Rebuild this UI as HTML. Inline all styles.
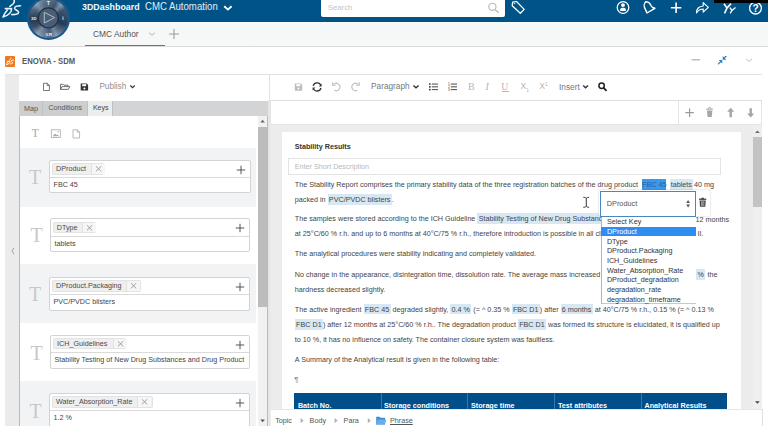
<!DOCTYPE html>
<html><head><meta charset="utf-8">
<style>
*{box-sizing:border-box;margin:0;padding:0}
html,body{width:768px;height:426px;overflow:hidden;background:#fff;font-family:"Liberation Sans",sans-serif;color:#3d3d3d}
.a{position:absolute}
.t{white-space:pre;line-height:1}
/* top bar */
#top{left:0;top:0;width:768px;height:21.5px;background:#005386}
#tabs{left:0;top:21.5px;width:768px;height:25px;background:linear-gradient(#f5f9f9,#f7f7f7);border-bottom:1.3px solid #dadada}
#hdr{left:0;top:46.5px;width:768px;height:28px;background:#fff}
#hdrline{left:5px;top:74px;width:757px;height:1px;background:#e2e2e2}
#lstrip{left:5px;top:74.5px;width:13.5px;height:352px;background:#ebebeb}
/* left panel */
#ltool{left:18.5px;top:75px;width:250.5px;height:25.5px;background:#fff}
#vdiv{left:269px;top:74.5px;width:1px;height:26px;background:#e2e2e2}
#ltabs{left:18.5px;top:100.5px;width:249.5px;height:15.5px;background:#d1d2d3}
.ltab{top:0;height:15.5px;font-size:7.2px;color:#555;line-height:15.5px;text-align:center;border-right:1px solid #c2c3c4}
#lcont{left:18.5px;top:116px;width:249.5px;height:310px;background:#fff}
.item{left:20px;width:235.5px;height:58.25px}
.item.g{background:#f2f3f4}
.bigT{font-family:"Liberation Serif",serif;font-size:20px;color:#c8c8c8;left:9px;top:20px}
.box{left:28.8px;top:12.4px;width:200.8px;height:33.2px;border:1px solid #d3d3d3;border-radius:2px;background:#fff}
.boxdiv{left:0;top:16px;width:100%;height:1px;background:#dadada}
.chip{left:2px;top:1.9px;height:11px;background:#efefef;border:1px solid #e3e3e3;border-radius:1.5px}
.chip .ct{position:absolute;left:3.2px;top:0.6px;font-size:7.2px;color:#4a4a4a;white-space:pre;line-height:1}
.chip .cx{position:absolute;top:0;width:14px;height:9px;border-left:1px solid #e0e0e0;background:#f6f6f6}
.chip .cx svg{position:absolute;left:0;top:0}
.plus{right:4px;top:3px;width:9px;height:9px}
.val{left:3.5px;top:20.5px;font-size:7.2px;color:#444}
/* right panel */
#rtool{left:270px;top:74.5px;width:492px;height:26px;background:#fff}
#rbox{left:270px;top:100px;width:492px;height:25px;background:#fff;border:1px solid #e4e4e4;border-top:1.7px solid #dedede}
#rboxdiv{left:678px;top:101px;width:1px;height:24px;background:#e4e4e4}
#gray{left:270px;top:125px;width:492px;height:301px;background:#ececec}
#page{left:282px;top:132px;width:458.5px;height:294px;background:#fff}
#rscroll{left:752.5px;top:125px;width:9.5px;height:284px;background:#ececec}
#crumb{left:270.5px;top:409px;width:492.5px;height:18px;background:#fff;border-top:1px solid #e6e6e6;border-right:1px solid #dedede}
.doc{font-size:7.2px;color:#444;line-height:15px;white-space:pre}
.hl{background:#d7e7f4;padding:0.9px 1.3px}
.hs{background:#3c97f0;color:#2a5f9a;padding:0.9px 0;margin-left:2.1px}
</style></head><body>

<div id="top" class="a"></div>
<div id="tabs" class="a"></div>
<!-- 3ds logo -->
<svg class="a" style="left:0;top:0" width="24" height="21" viewBox="0 0 24 21">
<g fill="none" stroke="#eaf2fa" stroke-width="1.55" stroke-linecap="round" stroke-linejoin="round">
<path d="M14,0 C15,2 13,4.5 9.8,6.4"/>
<path d="M5.3,8.6 L11.5,8.6 C12.2,12 8.5,15.5 3,17 C4,14.5 5.5,12 7.2,10.2"/>
<path d="M20.5,5.7 C17,5.7 14.2,6.6 14.6,8.5 C15,10.2 19,10.6 18.6,12.6 C18.2,14.3 14.5,14.6 11.8,14.6"/>
</g></svg>
<!-- compass -->
<div class="a" style="left:26.6px;top:-3.6px;width:43.4px;height:43.4px;border-radius:50%;background:#1a5689"></div>
<div class="a" style="left:28.9px;top:-1.3px;width:38.8px;height:38.8px;border-radius:50%;background:conic-gradient(from 0deg,#6d87a2 0deg,#4f6a88 25deg,#9db3c8 42deg,#4a6483 60deg,#3a5472 85deg,#2c445f 110deg,#6f8aa5 140deg,#a2b7ca 155deg,#5e7894 175deg,#7f97b0 195deg,#a8bcce 215deg,#40597a 240deg,#2a425d 270deg,#5c7693 300deg,#a4b8cb 320deg,#6d87a2 345deg,#6d87a2 360deg)"></div>
<div class="a" style="left:28.9px;top:-1.3px;width:38.8px;height:38.8px;border-radius:50%;background:radial-gradient(circle,rgba(20,35,55,0.4) 0%,rgba(20,35,55,0.3) 52%,rgba(20,35,55,0.0) 82%,rgba(255,255,255,0.1) 100%)"></div>
<svg class="a" style="left:26px;top:0" width="45" height="41" viewBox="26 0 45 41">
<circle cx="48.3" cy="17.9" r="10.6" fill="#223244"/>
<circle cx="48.3" cy="17.9" r="9.3" fill="#4a5e76"/>
<path d="M44.3,12.3 L54.6,17.6 L44.3,23 Z" fill="none" stroke="#b9c7d6" stroke-width="0.9" stroke-linejoin="round"/>
<text x="48.3" y="5" font-size="4.6" fill="#eef3f7" text-anchor="middle" font-family="Liberation Sans" font-weight="bold">T</text>
<text x="33.8" y="19.6" font-size="4.3" fill="#eef3f7" text-anchor="middle" font-family="Liberation Sans" font-weight="bold">3D</text>
<text x="62.9" y="19.6" font-size="4.8" fill="#eef3f7" text-anchor="middle" font-family="Liberation Sans" font-weight="bold">i</text>
<text x="48.8" y="35.5" font-size="4.3" fill="#eef3f7" text-anchor="middle" font-family="Liberation Sans" font-weight="bold">V.R</text>
</svg>
<div class="a t" style="left:81.5px;top:2.2px;font-size:9.7px;font-weight:bold;color:#f4f8fb;transform:scaleX(0.915);transform-origin:0 0">3DDashboard</div>
<div class="a t" style="left:145px;top:2.1px;font-size:10.3px;color:#e3ecf3;transform:scaleX(0.935);transform-origin:0 0">CMC Automation</div>
<svg class="a" style="left:223px;top:4.5px" width="10" height="6" viewBox="0 0 10 6"><path d="M1.2,1.3 L4.9,4.6 L8.6,1.3" fill="none" stroke="#fff" stroke-width="1.9"/></svg>
<!-- search -->
<div class="a" style="left:321px;top:-2px;width:184px;height:19.2px;background:#fff;border-radius:2px"></div>
<div class="a t" style="left:327.7px;top:4.1px;font-size:7.8px;color:#c4c4c4">Search</div>
<svg class="a" style="left:486px;top:1px" width="15" height="14" viewBox="486 1 15 14"><circle cx="492.4" cy="6.8" r="3.6" fill="none" stroke="#bababa" stroke-width="1.15"/><path d="M495,9.4 L498.6,12.8" stroke="#bababa" stroke-width="1.4"/></svg>
<svg class="a" style="left:510px;top:0" width="17" height="16" viewBox="510 0 17 16"><path d="M512.6,2.2 L516.5,1.5 L524.2,9.4 L520.3,13.3 L512.2,5.8 Z" fill="none" stroke="#fff" stroke-width="1.25" stroke-linejoin="round"/><circle cx="514.6" cy="3.6" r="0.7" fill="#fff"/></svg>
<!-- right icons -->
<svg class="a" style="left:615px;top:0" width="153" height="18" viewBox="615 0 153 18">
<g fill="none" stroke="#fff" stroke-width="1.25">
<circle cx="623" cy="7.5" r="5.8"/>
<path d="M645.8,1.9 C648,1.7 650,3 650.8,5.2 C651.5,7 652.5,7.8 654.9,8.3 L646.9,13 C646.5,11.5 645.8,10 644.9,8.3 C643.8,6.2 644,3.2 645.8,1.9 Z" stroke-width="1.4" stroke-linejoin="round"/><circle cx="645.9" cy="1.7" r="0.8" fill="#fff" stroke="none"/>
<path d="M670.9,7.8 L681.3,7.8 M676.1,2.6 L676.1,13" stroke-width="1.6"/>
<path d="M696.5,13 C696.3,8.8 699,6.2 703.2,6 L703.2,2.6 L708.3,7.4 L703.2,12.2 L703.2,9 C700.2,9 698,10.6 696.5,13 Z" stroke-width="1.15" stroke-linejoin="round"/>
<circle cx="755.5" cy="8.1" r="5.9" stroke-width="1.3"/>
</g>
<circle cx="623" cy="5.1" r="1.95" fill="#fff"/>
<path d="M620.2,10.9 L620.2,9.5 C620.2,8.4 621.2,7.8 623,7.8 C624.8,7.8 625.8,8.4 625.8,9.5 L625.8,10.9 Z" fill="#fff"/>
<text x="755.6" y="11.7" font-size="10.2" fill="#fff" text-anchor="middle" font-family="Liberation Sans" font-weight="bold">?</text>
<path d="M724,3.8 L727,8 L724.5,13.4 M731,3.6 L727,8" fill="none" stroke="#fff" stroke-width="1.6"/>
<path d="M729.8,7.6 L732,10.4 L730.2,13.4 M735.5,7.6 L732,10.4" fill="none" stroke="#fff" stroke-width="1.3"/>
</svg>
<div class="a" style="left:714px;top:0;width:54px;height:2.9px;background:#000"></div>
<!-- tab -->
<div class="a t" style="left:93px;top:30.3px;font-size:8.4px;color:#555">CMC Author</div>
<svg class="a" style="left:148px;top:31px" width="8" height="6" viewBox="0 0 8 6"><path d="M1,1.8 L4,4.2 L7,1.8" fill="none" stroke="#aaa" stroke-width="0.9"/></svg>
<svg class="a" style="left:168px;top:28px" width="12" height="12" viewBox="0 0 12 12"><path d="M1,6 L11,6 M6,1 L6,11" fill="none" stroke="#9a9a9a" stroke-width="1.1"/></svg>
<div class="a" style="left:84.7px;top:44.6px;width:80.5px;height:1.8px;background:#3f7fb5"></div>
<div id="hdr" class="a"></div>
<div id="hdrline" class="a"></div>
<div class="a" style="left:5.2px;top:56.2px;width:9.8px;height:10.5px;background:#eb7a22;border-radius:1px"></div>
<svg class="a" style="left:5px;top:56.5px" width="10" height="10" viewBox="0 0 24 21"><g fill="none" stroke="#fff" stroke-width="2.2" stroke-linecap="round"><path d="M14,1 C15,3 13,5 10,7"/><path d="M5.3,9 L11.5,9 C12.2,12 8.5,15.5 3,17.5 C4,14.5 5.5,12 7.2,10.4"/><path d="M20.5,6 C17,6 14.2,7 14.6,9 C15,10.5 19,11 18.6,13 C18.2,14.5 14.5,15 11.8,15"/></g></svg>
<div class="a t" style="left:21.6px;top:56.6px;font-size:8.5px;font-weight:bold;color:#595959;transform:scaleX(0.905);transform-origin:0 0">ENOVIA - SDM</div>
<svg class="a" style="left:690px;top:56px" width="70" height="10" viewBox="690 56 70 10">
<path d="M691.6,59.8 L700.1,59.8" stroke="#b4b4b4" stroke-width="1.3"/>
<path d="M718.5,63.9 L721.3,61.1 M726.4,55.8 L723.6,58.6" fill="none" stroke="#2f7fc0" stroke-width="1.3" stroke-linecap="round"/>
<path d="M722.3,59.9 L718.7,59.9 L722.3,63.5 Z M722.7,59.7 L722.7,56.1 L726.3,59.7 Z" fill="#2f7fc0"/>
<path d="M746.2,59 L749.1,61.4 L752,59" fill="none" stroke="#b0b0b0" stroke-width="0.8"/>
</svg>
<div id="lstrip" class="a"></div>
<div id="ltool" class="a"></div>
<div id="vdiv" class="a"></div>
<div id="ltabs" class="a"></div>
<div id="lcont" class="a"></div>
<!-- left toolbar -->
<svg class="a" style="left:40px;top:80px" width="100" height="14" viewBox="40 80 100 14">
<path d="M43.5,83.3 L47.4,83.3 L49.4,85.3 L49.4,90.5 L43.5,90.5 Z M47.2,83.4 L47.2,85.5 L49.3,85.5" fill="none" stroke="#555" stroke-width="0.8" stroke-linejoin="round"/>
<path d="M60.5,89.4 L60.5,84.3 L63.2,84.3 L64,85.2 L68,85.2 L68,86.4 M60.5,89.4 L62,86.6 L69.8,86.6 L68.3,89.4 Z" fill="none" stroke="#555" stroke-width="0.85" stroke-linejoin="round"/>
<path d="M80.7,83.4 L86.6,83.4 L88.1,84.9 L88.1,90.6 L80.7,90.6 Z" fill="#333"/>
<rect x="82.2" y="84.2" width="4" height="2" fill="#fff"/>
<circle cx="84.4" cy="88.5" r="1" fill="#fff"/>
<path d="M130.3,85.5 L132.5,87.6 L134.7,85.5" fill="none" stroke="#333" stroke-width="1.2"/>
</svg>
<div class="a t" style="left:99.4px;top:83.4px;font-size:8.2px;color:#8f8f8f">Publish</div>
<!-- tabs -->
<div class="a" style="left:18.5px;top:101px;width:249px;height:14.5px;background:#d3d4d5"></div>
<div class="a" style="left:18.5px;top:101px;width:24px;height:14.5px;background:#cdcecf;border-right:1px solid #c0c1c2"></div>
<div class="a" style="left:42.6px;top:101px;width:45px;height:14.5px;background:#cdcecf;border-right:1px solid #c0c1c2"></div>
<div class="a" style="left:87.6px;top:101px;width:25.6px;height:15px;background:#ededed;border-right:1px solid #bfc0c1"></div>
<div class="a t" style="left:23.9px;top:104.6px;font-size:7.2px;color:#555">Map</div>
<div class="a t" style="left:48.5px;top:105.1px;font-size:7.1px;color:#555">Conditions</div>
<div class="a t" style="left:92.9px;top:105.1px;font-size:7.1px;color:#444">Keys</div>
<!-- key panel icons -->
<div class="a t" style="left:31.8px;top:127.5px;font-family:'Liberation Serif',serif;font-size:11.5px;color:#a9a9a9">T</div>
<svg class="a" style="left:48px;top:127px" width="36" height="13" viewBox="48 127 36 13">
<rect x="51.3" y="129.8" width="9" height="7.6" fill="none" stroke="#a9a9a9" stroke-width="0.8"/>
<path d="M52.8,136.3 L55,133.6 L56.6,135.2 L57.6,134.2 L59,136.3 Z" fill="#a9a9a9"/>
<circle cx="58.2" cy="131.8" r="0.7" fill="#a9a9a9"/>
<path d="M73,129.8 L77.4,129.8 L79.6,132 L79.6,138 L73,138 Z M77.2,129.9 L77.2,132.2 L79.5,132.2" fill="none" stroke="#a9a9a9" stroke-width="0.8" stroke-linejoin="round"/>
</svg>
<!-- scrollbar left -->
<div class="a" style="left:258px;top:116px;width:9.2px;height:310px;background:#f1f1f1"></div>
<div class="a" style="left:258px;top:126.7px;width:9.2px;height:180px;background:#bcbcbc"></div>
<svg class="a" style="left:258px;top:116px" width="10" height="10" viewBox="0 0 10 10"><path d="M2.3,6.5 L4.6,3.8 L6.9,6.5 Z" fill="#6a6a6a"/></svg>
<svg class="a" style="left:258px;top:416px" width="10" height="10" viewBox="0 0 10 10"><path d="M2.3,3.6 L4.6,6.3 L6.9,3.6 Z" fill="#555"/></svg>
<div class="a" style="left:18.8px;top:116px;width:1.1px;height:310px;background:#9fc2e2"></div>
<div class="a" style="left:267.2px;top:116px;width:1.1px;height:310px;background:#9fc2e2"></div>
<div class="a" style="left:268.3px;top:100px;width:1.8px;height:326px;background:#e6e6e6"></div>
<svg class="a" style="left:10px;top:246px" width="6" height="10" viewBox="0 0 6 10"><path d="M4,1.8 L2,5 L4,8.2" fill="none" stroke="#9a9a9a" stroke-width="0.9"/></svg>
<!-- items -->
<div class="a item g" style="top:148.2px;height:58.5px"></div>
<div class="a item" style="top:206.7px;height:58.5px"></div>
<div class="a item g" style="top:264.2px;height:58.5px"></div>
<div class="a item" style="top:322.7px;height:58.5px"></div>
<div class="a item g" style="top:381.3px;height:45px"></div>
<div class="a t bigT" style="left:29.0px;top:167.0px">T</div>
<div class="a box" style="left:49px;top:160px;width:201.5px;height:33px">
 <div class="a boxdiv" style="top:16px"></div>
 <div class="a chip" style="left:1.9px;top:2px;height:12px;width:52.5px"><span class="ct" style="top:0.6px">DProduct</span><span class="cx" style="left:37.7px;height:10px"><svg width="13" height="10" viewBox="0 0 13 10"><path d="M3.9,2.2 L9.2,7.4 M9.2,2.2 L3.9,7.4" stroke="#8a8a8a" stroke-width="0.8"/></svg></span></div>
 <svg class="a" style="right:3.8px;top:3.8px" width="10" height="10" viewBox="0 0 10 10"><path d="M0.8,5 L9.2,5 M5,0.8 L5,9.2" stroke="#555" stroke-width="1"/></svg>
 <div class="a t val" style="top:20.3px">FBC 45</div>
</div>
<div class="a t bigT" style="left:30.6px;top:225.2px">T</div>
<div class="a box" style="left:50px;top:218px;width:199.5px;height:34px">
 <div class="a boxdiv" style="top:17px"></div>
 <div class="a chip" style="left:1.6px;top:3px;height:11px;width:43.5px"><span class="ct" style="top:0.6px">DType</span><span class="cx" style="left:28.4px;height:9px"><svg width="13" height="10" viewBox="0 0 13 10"><path d="M3.9,2.2 L9.2,7.4 M9.2,2.2 L3.9,7.4" stroke="#8a8a8a" stroke-width="0.8"/></svg></span></div>
 <svg class="a" style="right:3.8px;top:3.8px" width="10" height="10" viewBox="0 0 10 10"><path d="M0.8,5 L9.2,5 M5,0.8 L5,9.2" stroke="#555" stroke-width="1"/></svg>
 <div class="a t val" style="top:20.7px">tablets</div>
</div>
<div class="a t bigT" style="left:29.0px;top:284.2px">T</div>
<div class="a box" style="left:49px;top:277px;width:201px;height:34px">
 <div class="a boxdiv" style="top:16px"></div>
 <div class="a chip" style="left:1.9px;top:2px;height:12px;width:88.9px"><span class="ct" style="top:0.6px">DProduct.Packaging</span><span class="cx" style="left:73.6px;height:10px"><svg width="13" height="10" viewBox="0 0 13 10"><path d="M3.9,2.2 L9.2,7.4 M9.2,2.2 L3.9,7.4" stroke="#8a8a8a" stroke-width="0.8"/></svg></span></div>
 <svg class="a" style="right:3.8px;top:3.8px" width="10" height="10" viewBox="0 0 10 10"><path d="M0.8,5 L9.2,5 M5,0.8 L5,9.2" stroke="#555" stroke-width="1"/></svg>
 <div class="a t val" style="top:20.3px">PVC/PVDC blisters</div>
</div>
<div class="a t bigT" style="left:30.6px;top:342.8px">T</div>
<div class="a box" style="left:50px;top:335px;width:199.5px;height:34px">
 <div class="a boxdiv" style="top:16px"></div>
 <div class="a chip" style="left:1.9px;top:2px;height:11px;width:73.2px"><span class="ct" style="top:0.6px">ICH_Guidelines</span><span class="cx" style="left:58.7px;height:9px"><svg width="13" height="10" viewBox="0 0 13 10"><path d="M3.9,2.2 L9.2,7.4 M9.2,2.2 L3.9,7.4" stroke="#8a8a8a" stroke-width="0.8"/></svg></span></div>
 <svg class="a" style="right:3.8px;top:3.8px" width="10" height="10" viewBox="0 0 10 10"><path d="M0.8,5 L9.2,5 M5,0.8 L5,9.2" stroke="#555" stroke-width="1"/></svg>
 <div class="a t val" style="top:20.3px">Stability Testing of New Drug Substances and Drug Product</div>
</div>
<div class="a t bigT" style="left:29.5px;top:401.0px">T</div>
<div class="a box" style="left:49px;top:393px;width:201px;height:34px">
 <div class="a boxdiv" style="top:16px"></div>
 <div class="a chip" style="left:1.8px;top:2px;height:12px;width:101.0px"><span class="ct" style="top:0.6px">Water_Absorption_Rate</span><span class="cx" style="left:84.5px;height:10px"><svg width="13" height="10" viewBox="0 0 13 10"><path d="M3.9,2.2 L9.2,7.4 M9.2,2.2 L3.9,7.4" stroke="#8a8a8a" stroke-width="0.8"/></svg></span></div>
 <svg class="a" style="right:3.8px;top:3.8px" width="10" height="10" viewBox="0 0 10 10"><path d="M0.8,5 L9.2,5 M5,0.8 L5,9.2" stroke="#555" stroke-width="1"/></svg>
 <div class="a t val" style="top:20.3px">1.2 %</div>
</div>
<!-- /items -->
<div id="rtool" class="a"></div>
<div id="rbox" class="a"></div>
<div id="rboxdiv" class="a"></div>
<div id="gray" class="a"></div>
<div id="page" class="a"></div>
<!-- doc -->
<div class="a t" style="left:294.8px;top:143.3px;font-size:7.2px;font-weight:bold;color:#333">Stability Results</div>
<div class="a" style="left:288px;top:158px;width:433px;height:17px;border:1px solid #e3e3e3;background:#fff"></div>
<div class="a t" style="left:294.8px;top:162.8px;font-size:7.2px;color:#b8b8b8">Enter Short Description</div>
<div id="doc">
<div class="a doc" style="left:294.8px;top:176.7px">The Stability Report comprises the primary stability data of the three registration batches of the drug product <span class="hs">FBC 45</span> <span class="hl" style="padding:0.9px 1.1px;margin-left:1.1px">tablets</span><span style="margin-left:1px">40 mg</span></div>
<div class="a doc" style="left:294.8px;top:191.7px">packed in <span class="hl">PVC/PVDC blisters</span>.</div>
<div class="a doc" style="left:294.8px;top:211.2px">The samples were stored according to the ICH Guideline <span class="hl">Stability Testing of New Drug Substances and Drug Product</span></div>
<div class="a doc" style="left:695.5px;top:211.8px">12 months</div>
<div class="a doc" style="left:294.8px;top:225.8px">at 25°C/60 % r.h. and up to 6 months at 40°C/75 % r.h., therefore introduction is possible in all climatic zones I to IV.</div>
<div class="a doc" style="left:697.6px;top:225.8px">II.</div>
<div class="a doc" style="left:294.8px;top:246.1px">The analytical procedures were stability indicating and completely validated.</div>
<div class="a doc" style="left:294.8px;top:266.9px">No change in the appearance, disintegration time, dissolution rate. The average mass increased by 1.2</div>
<div class="a doc" style="left:695.9px;top:266.9px"><span class="hl" style="padding:0.9px 1.6px">%</span> the</div>
<div class="a doc" style="left:294.8px;top:282.2px">hardness decreased slightly.</div>
<div class="a doc" style="left:294.8px;top:301.6px">The active ingredient <span class="hl">FBC 45</span> degraded slightly, <span class="hl">0.4 %</span> (= ^ 0.35 % <span class="hl">FBC D1</span>) after <span class="hl">6 months</span> at 40°C/75 % r.h., 0.15 % (= ^ 0.13 %</div>
<div class="a doc" style="left:294.8px;top:316.8px"><span class="hl">FBC D1</span>) after 12 months at 25°C/60 % r.h.. The degradation product <span class="hl">FBC D1</span> was formed its structure is elucidated, it is qualified up</div>
<div class="a doc" style="left:294.8px;top:331.5px">to 10 %, it has no influence on safety. The container closure system was faultless.</div>
<div class="a doc" style="left:294.8px;top:351.8px">A Summary of the Analytical result is given in the following table:</div>
<div class="a doc" style="left:294.3px;top:372.3px;color:#8a8a8a;font-size:8px">¶</div>
</div>
<!-- popup -->
<div class="a" style="left:599.2px;top:190.3px;width:110.5px;height:26px;background:#fff;box-shadow:0 0 1.5px rgba(0,0,0,0.35);border-radius:1.5px"></div>
<div class="a" style="left:600.4px;top:191.4px;width:95.3px;height:25.3px;background:#fff;border:1px solid #4a86c0"></div>
<div class="a t" style="left:606.8px;top:199.8px;font-size:7.3px;color:#555">DProduct</div>
<svg class="a" style="left:684px;top:197px" width="9" height="13" viewBox="684 197 9 13"><path d="M686.2,203 L688.1,200 L690,203 Z M686.2,204.5 L688.1,207.5 L690,204.5 Z" fill="#555"/></svg>
<svg class="a" style="left:697px;top:196px" width="11" height="12" viewBox="697 196 11 12">
<rect x="699" y="198.6" width="7.3" height="1.3" fill="#444"/><rect x="701.3" y="197.8" width="2.7" height="1.2" fill="#444"/>
<path d="M699.6,200.4 L705.7,200.4 L705.3,206.7 L700,206.7 Z" fill="#444"/>
<path d="M701.5,201.2 L701.5,206 M702.65,201.2 L702.65,206 M703.8,201.2 L703.8,206" stroke="#fff" stroke-width="0.45"/>
</svg>
<div class="a" style="left:600.6px;top:216.7px;width:95.1px;height:87.8px;background:#fff;border-left:1px solid #b4b4b4;border-bottom:1px solid #c8c8c8"></div>
<div class="a" style="left:600.6px;top:227.4px;width:95.1px;height:9px;background:#2f8cf0"></div>
<div class="a" style="left:606.9px;top:217.2px;font-size:7.2px;line-height:9.7px;color:#333;white-space:pre">Select Key
<span style="color:#fff">DProduct</span>
DType
DProduct.Packaging
ICH_Guidelines
Water_Absorption_Rate
DProduct_degradation
degradation_rate
degradation_timeframe</div>
<!-- table header -->
<div class="a" style="left:294.4px;top:393.1px;width:433.1px;height:16px;background:#004f8a"></div>
<div class="a" style="left:380.6px;top:393.1px;width:0.8px;height:16px;background:#3a77a8"></div>
<div class="a" style="left:466.8px;top:393.1px;width:0.8px;height:16px;background:#3a77a8"></div>
<div class="a" style="left:554px;top:393.1px;width:0.8px;height:16px;background:#3a77a8"></div>
<div class="a" style="left:641.1px;top:393.1px;width:0.8px;height:16px;background:#3a77a8"></div>
<div class="a t" style="left:297.9px;top:402px;font-size:7.2px;font-weight:bold;color:#fff">Batch No.</div>
<div class="a t" style="left:384px;top:402px;font-size:7.2px;font-weight:bold;color:#fff">Storage conditions</div>
<div class="a t" style="left:471px;top:402px;font-size:7.2px;font-weight:bold;color:#fff">Storage time</div>
<div class="a t" style="left:558px;top:402px;font-size:7.2px;font-weight:bold;color:#fff">Test attributes</div>
<div class="a t" style="left:644.5px;top:402px;font-size:7.2px;font-weight:bold;color:#fff">Analytical Results</div>
<!-- right toolbar -->
<svg class="a" style="left:290px;top:78px" width="320" height="18" viewBox="290 78 320 18">
<path d="M294.8,83.4 L300.8,83.4 L302.2,84.8 L302.2,90.7 L294.8,90.7 Z" fill="#bdbdbd"/>
<rect x="296.2" y="84.2" width="4.2" height="2" fill="#fff"/><circle cx="298.5" cy="88.5" r="1" fill="#fff"/>
<g fill="none" stroke="#333" stroke-width="1.3">
<path d="M313.2,85.9 A4.1,4.1 0 0 1 320.7,84.9"/><path d="M321,88 A4.1,4.1 0 0 1 313.5,89"/>
</g>
<path d="M321.6,83.4 L321.6,86.4 L318.8,86.4 Z M312.6,90.6 L312.6,87.6 L315.4,87.6 Z" fill="#333"/>
<g fill="none" stroke="#bdbdbd" stroke-width="1.1">
<path d="M333.5,84.5 A3.7,3.7 0 1 1 334.5,90.3"/><path d="M332.6,82.3 L332.6,85.3 L335.6,85.3"/>
<path d="M358.3,84.5 A3.7,3.7 0 1 0 357.3,90.3"/><path d="M359.2,82.3 L359.2,85.3 L356.2,85.3"/>
</g>
<path d="M413.4,85.4 L416,87.8 L418.6,85.4" fill="none" stroke="#333" stroke-width="1.35"/>
<g fill="#333">
<rect x="429" y="83.3" width="1.6" height="1.5"/><rect x="429" y="86.1" width="1.6" height="1.5"/><rect x="429" y="88.9" width="1.6" height="1.5"/>
<rect x="431.8" y="83.6" width="6.2" height="0.9"/><rect x="431.8" y="86.4" width="6.2" height="0.9"/><rect x="431.8" y="89.2" width="6.2" height="0.9"/>
<rect x="450.8" y="83.6" width="6.2" height="0.9"/><rect x="450.8" y="86.4" width="6.2" height="0.9"/><rect x="450.8" y="89.2" width="6.2" height="0.9"/>
</g>
<text x="448" y="85.2" font-size="3.2" fill="#333" font-family="Liberation Sans">1</text>
<text x="448" y="88" font-size="3.2" fill="#333" font-family="Liberation Sans">2</text>
<text x="448" y="90.8" font-size="3.2" fill="#333" font-family="Liberation Sans">3</text>
<path d="M583.2,85.4 L585.6,87.8 L588,85.4" fill="none" stroke="#333" stroke-width="1.35"/>
<circle cx="601.6" cy="85.8" r="2.7" fill="none" stroke="#222" stroke-width="1.5"/>
<path d="M603.6,87.8 L606.6,90.8" stroke="#222" stroke-width="1.8"/>
</svg>
<div class="a t" style="left:371.1px;top:83.3px;font-size:8.25px;color:#777">Paragraph</div>
<div class="a t" style="left:467.9px;top:82px;font-family:'Liberation Serif',serif;font-size:10px;color:#b5b5b5">B</div>
<div class="a t" style="left:485.6px;top:82px;font-family:'Liberation Serif',serif;font-style:italic;font-size:10px;color:#b5b5b5">I</div>
<div class="a t" style="left:501.3px;top:82.3px;font-family:'Liberation Serif',serif;font-size:9.6px;color:#b5b5b5">U</div>
<div class="a" style="left:501.5px;top:91.2px;width:7.5px;height:0.9px;background:#b5b5b5"></div>
<div class="a t" style="left:520.4px;top:82.4px;font-size:8.6px;color:#b5b5b5">X<span style="font-size:5px;position:relative;top:2.5px">1</span></div>
<div class="a t" style="left:539.2px;top:82.4px;font-size:8.6px;color:#b5b5b5">X<span style="font-size:5px;position:relative;top:-3px">1</span></div>
<div class="a t" style="left:559px;top:83.3px;font-size:8.3px;color:#777">Insert</div>
<!-- rbox icons -->
<svg class="a" style="left:680px;top:103px" width="80" height="20" viewBox="680 103 80 20">
<path d="M685.4,112.7 L693.8,112.7 M689.6,108.5 L689.6,116.9" stroke="#9a9a9a" stroke-width="1.2"/>
<path d="M706.3,109.2 L713,109.2 M708.3,108.8 L708.8,107.7 L710.6,107.7 L711.1,108.8" fill="none" stroke="#a5a5a5" stroke-width="1"/>
<path d="M706.9,110.5 L712.4,110.5 L711.7,117 L707.6,117 Z" fill="#a5a5a5"/>
<path d="M730.7,107.8 L727.2,111.8 L729.5,111.8 L729.5,117.2 L731.9,117.2 L731.9,111.8 L734.2,111.8 Z" fill="#a5a5a5"/>
<path d="M750.7,117.6 L747.2,113.6 L749.5,113.6 L749.5,108.2 L751.9,108.2 L751.9,113.6 L754.2,113.6 Z" fill="#a5a5a5"/>
</svg>
<!-- right scrollbar -->
<div class="a" style="left:752.8px;top:125px;width:9.2px;height:284px;background:#efefef"></div>
<div class="a" style="left:753px;top:136.9px;width:8.6px;height:70.4px;background:#c3c3c3"></div>
<svg class="a" style="left:752.8px;top:127px" width="9" height="10" viewBox="0 0 9 10"><path d="M2,6 L4.4,3.5 L6.8,6 Z" fill="#6a6a6a"/></svg>
<svg class="a" style="left:752.8px;top:398px" width="9" height="10" viewBox="0 0 9 10"><path d="M2,3.3 L4.4,5.8 L6.8,3.3 Z" fill="#444"/></svg>

<svg class="a" style="left:580px;top:194px" width="12" height="16" viewBox="580 194 12 16"><path d="M583.3,197.3 C584.5,197.3 585.8,197.6 586.3,198.3 C586.8,197.6 588,197.3 589.1,197.3 M586.3,198.3 L586.3,206.3 M583.3,207.3 C584.5,207.3 585.8,207 586.3,206.3 C586.8,207 588,207.3 589.1,207.3" fill="none" stroke="#fff" stroke-width="2"/><path d="M583.3,197.3 C584.5,197.3 585.8,197.6 586.3,198.3 C586.8,197.6 588,197.3 589.1,197.3 M586.3,198.3 L586.3,206.3 M583.3,207.3 C584.5,207.3 585.8,207 586.3,206.3 C586.8,207 588,207.3 589.1,207.3" fill="none" stroke="#222" stroke-width="0.9"/></svg>
<!-- breadcrumb -->
<div id="crumb" class="a"></div>
<div class="a t" style="left:275.2px;top:417px;font-size:7.2px;color:#555">Topic</div>
<div class="a t" style="left:309.6px;top:417px;font-size:7.2px;color:#555">Body</div>
<div class="a t" style="left:343.6px;top:417px;font-size:7.2px;color:#555">Para</div>
<div class="a t" style="left:390px;top:417px;font-size:7.2px;color:#555;text-decoration:underline">Phrase</div>
<svg class="a" style="left:296px;top:414px" width="100" height="12" viewBox="296 414 100 12">
<path d="M300.6,418 L303.6,420.6 L300.6,423.2 Z M334.6,418 L337.6,420.6 L334.6,423.2 Z M367.8,418 L370.8,420.6 L367.8,423.2 Z" fill="#b0b0b0"/>
<path d="M376.2,416.8 L379.6,416.8 L380.5,417.8 L385,417.8 L385,424.5 L376.2,424.5 Z" fill="#3f8fd8"/>
<path d="M376.2,424.5 L377.8,419.6 L386.3,419.6 L385,424.5 Z" fill="#69adea"/>
</svg>
</body></html>
